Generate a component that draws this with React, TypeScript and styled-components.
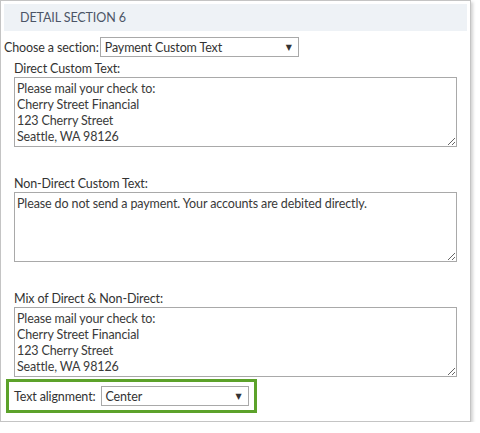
import styled, { createGlobalStyle } from "styled-components";

const GlobalStyle = createGlobalStyle`
  body {
    margin: 0;
    background: #ffffff;
    font-family: Lato, "Open Sans", sans-serif;
  }
`;

const fields = [
  {
    label: "Direct Custom Text:",
    text: "Please mail your check to:\nCherry Street Financial\n123 Cherry Street\nSeattle, WA 98126",
  },
  {
    label: "Non-Direct Custom Text:",
    text: "Please do not send a payment. Your accounts are debited directly.",
  },
  {
    label: "Mix of Direct & Non-Direct:",
    text: "Please mail your check to:\nCherry Street Financial\n123 Cherry Street\nSeattle, WA 98126",
  },
];

const App = () => {
  return (
    <>
      <GlobalStyle />
      <Panel>
        <Header>DETAIL SECTION 6</Header>
        <Row>
          <RowLabel>Choose a section:</RowLabel>
          <Select $width={199}>
            <span>Payment Custom Text</span>
            <Arrow>▼</Arrow>
          </Select>
        </Row>
        <Fields>
          {fields.map((f) => (
            <Field key={f.label}>
              <FieldLabel>{f.label}</FieldLabel>
              <TextBox readOnly defaultValue={f.text} />
            </Field>
          ))}
        </Fields>
        <Highlight>
          <RowLabel>Text alignment:</RowLabel>
          <Select $width={148}>
            <span>Center</span>
            <Arrow>▼</Arrow>
          </Select>
        </Highlight>
      </Panel>
    </>
  );
};

const Panel = styled.div`
  box-sizing: border-box;
  width: 471px;
  height: 422px;
  border: 1px solid #c4c4c4;
  box-shadow: 2px 2px 3px rgba(0, 0, 0, 0.18);
  padding: 3px;
  display: flex;
  flex-direction: column;
  color: #333333;
  font-size: 12.5px;
  letter-spacing: -0.12px;
`;

const Header = styled.div`
  height: 27px;
  background: #eef2f6;
  padding-left: 16px;
  display: flex;
  align-items: center;
  font-size: 12.5px;
  color: #4c5566;
  letter-spacing: -0.1px;
`;

const Row = styled.div`
  display: flex;
  align-items: center;
  gap: 1px;
  margin-top: 6px;
`;

const RowLabel = styled.div`
  white-space: nowrap;
`;

const Select = styled.div<{ $width: number }>`
  box-sizing: border-box;
  width: ${(p) => p.$width}px;
  height: 20px;
  border: 1px solid #a9a9a9;
  background: #ffffff;
  display: flex;
  align-items: center;
  justify-content: space-between;
  padding: 0 6px 0 4px;
`;

const Arrow = styled.span`
  font-size: 8px;
  color: #333333;
  font-family: "DejaVu Sans", sans-serif;
`;

const Fields = styled.div`
  display: flex;
  flex-direction: column;
  gap: 29px;
  padding-left: 10px;
  margin-top: 4px;
`;

const Field = styled.div`
  display: flex;
  flex-direction: column;
`;

const FieldLabel = styled.div`
  line-height: 16px;
`;

const TextBox = styled.textarea`
  box-sizing: border-box;
  width: 443px;
  height: 70px;
  margin: 0;
  border: 1px solid #a9a9a9;
  padding: 3px 2px;
  font-family: Lato, "Open Sans", sans-serif;
  font-size: 12.5px;
  letter-spacing: -0.12px;
  line-height: 16px;
  color: #3a3a3a;
  resize: vertical;
  outline: none;
  overflow: hidden;
`;

const Highlight = styled.div`
  box-sizing: border-box;
  align-self: flex-start;
  display: flex;
  align-items: center;
  gap: 5px;
  margin-top: 2px;
  margin-left: 2px;
  width: 251px;
  height: 34px;
  border: 3px solid #5ca22a;
  padding-left: 5px;
`;

export default App;
